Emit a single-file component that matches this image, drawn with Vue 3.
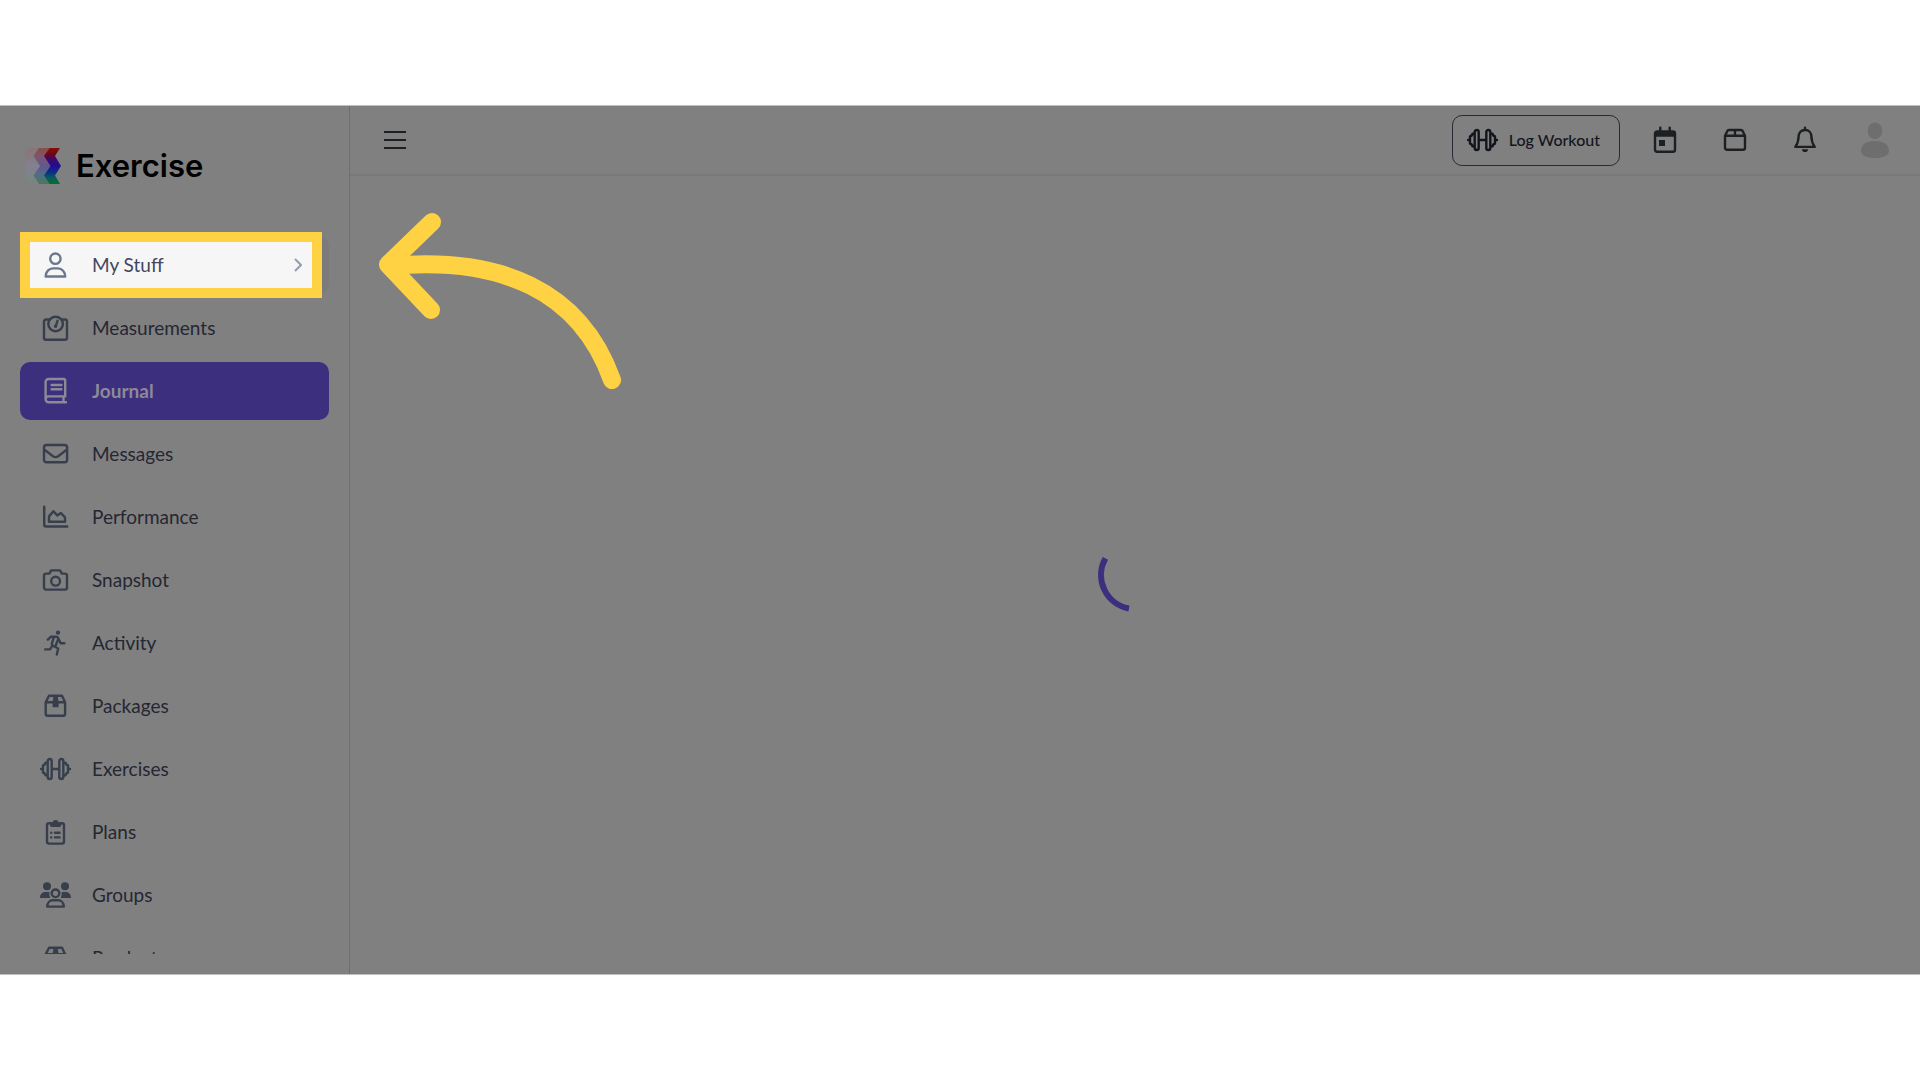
<script setup>
import { ref } from 'vue'

const activo = ref('Journal')
const menuAbierto = ref(true)

const items = [
  { name: 'My Stuff', icon: 'user', hint: true },
  { name: 'Measurements', icon: 'scale' },
  { name: 'Journal', icon: 'book' },
  { name: 'Messages', icon: 'mail' },
  { name: 'Performance', icon: 'chart' },
  { name: 'Snapshot', icon: 'camera' },
  { name: 'Activity', icon: 'run' },
  { name: 'Packages', icon: 'box' },
  { name: 'Exercises', icon: 'dumbbell' },
  { name: 'Plans', icon: 'clipboard' },
  { name: 'Groups', icon: 'group' },
  { name: 'Products', icon: 'box' }
]

// solid: shapes filled with the text colour, line: stroked shapes
const icons = {
  user: {
    line: 'M20.6 7.7a5.2 5.2 0 1 1-10.4 0a5.2 5.2 0 1 1 10.4 0z M5.7 25.5C5.7 20.8 9 17.4 13 17.4H18C22 17.4 25.2 20.8 25.2 25.5Z'
  },
  scale: {
    line: 'M8.3 5.5H6a2 2 0 0 0-2 2V23.7a2 2 0 0 0 2 2H25a2 2 0 0 0 2-2V7.5a2 2 0 0 0-2-2H23 M22.9 10a7.3 7.3 0 1 1-14.6 0a7.3 7.3 0 1 1 14.6 0z M15.8 12L17.5 6.8',
    solid: 'M17.4 12.3a1.8 1.8 0 1 1-3.6 0a1.8 1.8 0 1 1 3.6 0z'
  },
  book: {
    line: 'M26 25.2H8.6a3 3 0 0 1-3-3V5a3 3 0 0 1 3-3H23.8a1.4 1.4 0 0 1 1.4 1.4V19.4H8.6a3 3 0 0 0-3 2.8 M23.5 19.4V25 M11.6 8H21.4 M11.6 12.2H21.4'
  },
  mail: {
    line: 'M6.5 5H24.6a2.5 2.5 0 0 1 2.5 2.5V19.8a2.5 2.5 0 0 1-2.5 2.5H6.5A2.5 2.5 0 0 1 4 19.8V7.5A2.5 2.5 0 0 1 6.5 5z M4 9.4L13 16.3Q15.6 18 18.2 16.3L27.1 9.4'
  },
  chart: {
    line: 'M4.2 3.6V21.5a2 2 0 0 0 2 2H27.2 M9 18.8V13.4L13.4 8.2L17.3 12.4L20.8 10L25 14.4V18.8Z'
  },
  camera: {
    line: 'M6 7.6H9.5L11 4.4H20.2L21.7 7.6H25a2 2 0 0 1 2 2V21.6a2 2 0 0 1-2 2H6a2 2 0 0 1-2-2V9.6a2 2 0 0 1 2-2z M20 15.2a4.4 4.4 0 1 1-8.8 0a4.4 4.4 0 1 1 8.8 0z'
  },
  run: {
    line: 'M7.8 10.6L10.7 7.8H16.4Q17.9 8 18.4 9.6L20.6 14.3H24.4 M13.6 8.6L11.8 15Q11.8 16.4 13.4 17L18.2 19.5L16.8 25.6 M18.3 10L15.6 16.8 M5.2 20.4H10L11.6 17.8',
    solid: 'M20.2 3.6a2.2 2.2 0 1 1-4.4 0a2.2 2.2 0 1 1 4.4 0z'
  },
  box: {
    line: 'M9 3.7H22L25.1 10.2V21.8a2 2 0 0 1-2 2H7.7a2 2 0 0 1-2-2V10.2Z M5.7 10.2H25.1',
    solid: 'M13.6 3.5H17.6L18.6 10V15.2H12.6V10Z'
  },
  dumbbell: {
    line: 'M1 14H2.6 M28.4 14H30 M12.2 14H18.8 M7.7 6a2 2 0 0 1 4 0V22a2 2 0 0 1-4 0Z M19.3 6a2 2 0 0 1 4 0V22a2 2 0 0 1-4 0Z M7.2 7.6H5.6L4.6 9.6L3 10.4V17.6L4.6 18.4L5.6 20.4H7.2 M23.8 7.6H25.4L26.4 9.6L28 10.4V17.6L26.4 18.4L25.4 20.4H23.8'
  },
  clipboard: {
    line: 'M11 5.3H9a2 2 0 0 0-2 2V23.6a2 2 0 0 0 2 2H22a2 2 0 0 0 2-2V7.3a2 2 0 0 0-2-2H20 M15 14.8H19.6 M15 19.4H19.6',
    solid: 'M12.4 4.6a3.3 3.3 0 0 1 6.4 0H21.2V7.2A1.8 1.8 0 0 1 19.4 9H11.8A1.8 1.8 0 0 1 10 7.2V4.6Z M12.4 14.8a1.2 1.2 0 1 1-2.4 0a1.2 1.2 0 1 1 2.4 0z M12.4 19.4a1.2 1.2 0 1 1-2.4 0a1.2 1.2 0 1 1 2.4 0z'
  },
  group: {
    line: 'M19.3 12.3a3.8 3.8 0 1 1-7.6 0a3.8 3.8 0 1 1 7.6 0z M7.2 25.6C7.4 21.6 9.8 19.3 12.6 19.3H18.4C21.2 19.3 23.6 21.6 23.8 25.6Z',
    solid: 'M11 5.3a4 4 0 1 1-8 0a4 4 0 1 1 8 0z M29 5.3a4 4 0 1 1-8 0a4 4 0 1 1 8 0z M0 17C0 13.4 2 11 5 11H9.4V14.4L10.4 17Z M31 17C31 13.4 29 11 26 11H21.6V14.4L20.6 17Z'
  }
}
</script>

<template>
  <div class="page">
    <div class="stage">
      <aside v-show="menuAbierto" class="sidebar">
        <a href="#" class="brand">
          <svg class="logo" viewBox="0 0 36 36" aria-hidden="true">
            <defs>
              <linearGradient id="zigzag" x1="0" y1="0" x2="0" y2="1">
                <stop offset="0" stop-color="#860f04" />
                <stop offset="0.18" stop-color="#6b0718" />
                <stop offset="0.32" stop-color="#3c0872" />
                <stop offset="0.5" stop-color="#220c92" />
                <stop offset="0.66" stop-color="#0c2b88" />
                <stop offset="0.82" stop-color="#075a62" />
                <stop offset="1" stop-color="#04702c" />
              </linearGradient>
              <linearGradient id="zigzagSoft" x1="0" y1="0" x2="0" y2="1">
                <stop offset="0" stop-color="#8a4c45" />
                <stop offset="0.25" stop-color="#7d5670" />
                <stop offset="0.5" stop-color="#615790" />
                <stop offset="0.75" stop-color="#526e84" />
                <stop offset="1" stop-color="#4a775e" />
              </linearGradient>
              <linearGradient id="zigzagPale" x1="0" y1="0" x2="0" y2="1">
                <stop offset="0" stop-color="#897573" />
                <stop offset="0.5" stop-color="#838092" />
                <stop offset="1" stop-color="#76877e" />
              </linearGradient>
            </defs>
            <path d="M6 0H26V36H6a6 6 0 0 1-6-6V6a6 6 0 0 1 6-6z" fill="url(#zigzagPale)" />
            <path d="M14 0H26V36H14L8.5 27.5L15 18L8.5 8Z" fill="url(#zigzagSoft)" />
            <path d="M24.7 0H35L30 8L36 18L30 27.5L35 36H24.7L19 27.5L25.5 18L19 8Z" fill="url(#zigzag)" />
          </svg>
          <span class="brand-name">Exercise</span>
        </a>

        <nav class="nav">
          <a
            v-for="item in items"
            :key="item.name"
            href="#"
            class="nav-item"
            :class="{ active: item.name === activo, hint: item.hint }"
            @click.prevent="activo = item.name"
          >
            <span v-if="item.hint" class="spotlight"></span>
            <svg class="nav-icon" viewBox="0 0 32 28" aria-hidden="true">
              <path class="line" :d="icons[item.icon].line" />
              <path v-if="icons[item.icon].solid" class="solid" :d="icons[item.icon].solid" />
            </svg>
            <span class="nav-label">{{ item.name }}</span>
            <svg v-if="item.hint" class="chevron" viewBox="0 0 8 14" aria-hidden="true">
              <path d="M1 1L7 7L1 13" />
            </svg>
          </a>
        </nav>
      </aside>

      <div class="content">
        <header class="topbar">
          <button class="burger" aria-label="Toggle menu" @click="menuAbierto = !menuAbierto">
            <svg viewBox="0 0 22 20" width="22" height="20">
              <path d="M0 2H22M0 10H22M0 18H22" />
            </svg>
          </button>

          <div class="actions">
            <button class="log-btn">
              <svg class="log-icon" viewBox="0 0 32 28" aria-hidden="true">
                <path class="line" :d="icons.dumbbell.line" />
              </svg>
              <span>Log Workout</span>
            </button>
            <button class="icon-btn" aria-label="Calendar">
              <svg viewBox="0 0 28 28" width="28" height="28">
                <path class="line" d="M6 5.5H22a2 2 0 0 1 2 2V23.8a2 2 0 0 1-2 2H6a2 2 0 0 1-2-2V7.5a2 2 0 0 1 2-2z M9.3 1.6V5 M18.7 1.6V5" />
                <path class="solid" d="M4 5H24V10.8H4z M8 14H14V20H8z" />
              </svg>
            </button>
            <button class="icon-btn" aria-label="Packages">
              <svg viewBox="0 0 28 28" width="28" height="28">
                <path class="line" d="M8 4H20a2 2 0 0 1 1.8 1.2L24 10V21.8a2 2 0 0 1-2 2H6a2 2 0 0 1-2-2V10L6.2 5.2A2 2 0 0 1 8 4z M4 9.8H24 M14 4V9.8" />
              </svg>
            </button>
            <button class="icon-btn" aria-label="Notifications">
              <svg viewBox="0 0 28 28" width="28" height="28">
                <path class="line" d="M14 1.7V4 M14 4C9.8 4 7.6 7 7.6 10.6C7.6 15.8 6.4 18 4.3 20.9H23.7C21.6 18 20.4 15.8 20.4 10.6C20.4 7 18.2 4 14 4z" />
                <path class="solid" d="M11 23.3H17a3 2.8 0 0 1-6 0z" />
              </svg>
            </button>
            <button class="icon-btn avatar" aria-label="Account">
              <svg viewBox="0 0 28 36" width="28" height="36">
                <ellipse cx="14" cy="8.8" rx="7.3" ry="8.4" />
                <path d="M0 29C0 22.5 5 19 14 19S28 22.5 28 29C28 33.4 22 36 14 36S0 33.4 0 29z" />
              </svg>
            </button>
          </div>
        </header>

        <main class="loading">
          <svg class="spinner" viewBox="0 0 80 80" role="img" aria-label="Loading">
            <path d="M10.4 23.4A34 34 0 0 0 34 73.5" />
          </svg>
        </main>
      </div>

      <svg class="arrow" viewBox="0 0 246 178" aria-hidden="true">
        <path d="M54 10L10 52.5L53 98" />
        <path d="M12 54C122 44 202 78 234 168" />
      </svg>
    </div>
  </div>
</template>

<style>
body {
  margin: 0;
  background: #fff;
}
</style>

<style scoped>
.page {
  box-sizing: border-box;
  height: 100vh;
  padding: 105px 0;
  font-family: Lato, 'Open Sans', sans-serif;
  color: #252733;
}

.stage {
  position: relative;
  box-sizing: border-box;
  display: flex;
  height: 100%;
  background: #808080;
  border-top: 1px solid #bfc0c0;
  border-bottom: 1px solid #bfc0c0;
}

.sidebar {
  box-sizing: border-box;
  display: flex;
  flex-direction: column;
  flex: 0 0 350px;
  padding: 42px 20px 20px;
  border-right: 1px solid #6f6f70;
}

.brand {
  display: flex;
  align-items: center;
  gap: 15px;
  height: 36px;
  padding-left: 5px;
  margin-bottom: 42px;
  color: #000;
  text-decoration: none;
}

.logo {
  width: 36px;
  height: 36px;
}

.brand-name {
  font-family: Inter, sans-serif;
  font-size: 31px;
  font-weight: 600;
  line-height: 36px;
}

/* the list is longer than the sidebar, it scrolls without a bar */
.nav {
  display: flex;
  flex-direction: column;
  gap: 5px;
  flex: 1;
  min-height: 0;
  padding-top: 10px;
  overflow-x: hidden;
  overflow-y: auto;
  scrollbar-width: none;
}

.nav-item {
  position: relative;
  box-sizing: border-box;
  display: flex;
  align-items: center;
  gap: 20px;
  flex: 0 0 58px;
  padding: 0 20px;
  border-radius: 10px;
  color: #252733;
  font-size: 19px;
  line-height: 24px;
  text-decoration: none;
}

.nav-item.active {
  background: #3c2f7e;
  color: #8c8a96;
  font-weight: 700;
}

.nav-item.hint {
  background: #7b7b7b;
  color: #42465f;
}

.spotlight {
  position: absolute;
  top: -4px;
  bottom: -4px;
  left: 0;
  right: 7px;
  border: 10px solid #ffd243;
  background: #f6f6f6;
}

.nav-icon {
  position: relative;
  width: 32px;
  height: 28px;
  color: #373e4c;
}

.active .nav-icon {
  color: #8c8a96;
}

.hint .nav-icon {
  color: #6b768f;
}

.nav-label {
  position: relative;
  flex: 1;
}

.line {
  fill: none;
  stroke: currentColor;
  stroke-width: 2.4;
  stroke-linecap: round;
  stroke-linejoin: round;
}

.solid {
  fill: currentColor;
}

.chevron {
  position: relative;
  width: 8px;
  height: 14px;
  margin-right: 7px;
  fill: none;
  stroke: #929db0;
  stroke-width: 2;
}

.content {
  display: flex;
  flex-direction: column;
  flex: 1;
  min-width: 0;
}

.topbar {
  box-sizing: border-box;
  display: flex;
  align-items: center;
  justify-content: space-between;
  height: 70px;
  padding: 0 10px 0 34px;
  border-bottom: 2px solid #787878;
}

button {
  padding: 0;
  border: 0;
  background: none;
  color: #1c2023;
  font-family: inherit;
  cursor: pointer;
}

.burger svg {
  display: block;
  fill: none;
  stroke: #1c2023;
  stroke-width: 2;
}

.actions {
  display: flex;
  align-items: center;
}

.log-btn {
  box-sizing: border-box;
  display: flex;
  align-items: center;
  gap: 10px;
  height: 51px;
  padding: 0 19px 0 14px;
  margin-right: 10px;
  border: 1px solid #2a2a33;
  border-radius: 10px;
  color: #13151e;
  font-size: 16px;
  font-weight: 500;
  line-height: 24px;
}

.log-icon {
  width: 32px;
  height: 28px;
}

.icon-btn {
  display: flex;
  align-items: center;
  justify-content: center;
  width: 70px;
  height: 50px;
}

.avatar {
  fill: #6e6e6e;
}

.loading {
  display: flex;
  align-items: center;
  justify-content: center;
  flex: 1;
}

.spinner {
  width: 80px;
  height: 80px;
  fill: none;
  stroke: #3c2f7e;
  stroke-width: 6;
}

.arrow {
  position: absolute;
  top: 106px;
  left: 378px;
  width: 246px;
  height: 178px;
  fill: none;
  stroke: #ffd243;
  stroke-width: 18;
  stroke-linecap: round;
  stroke-linejoin: round;
}
</style>
